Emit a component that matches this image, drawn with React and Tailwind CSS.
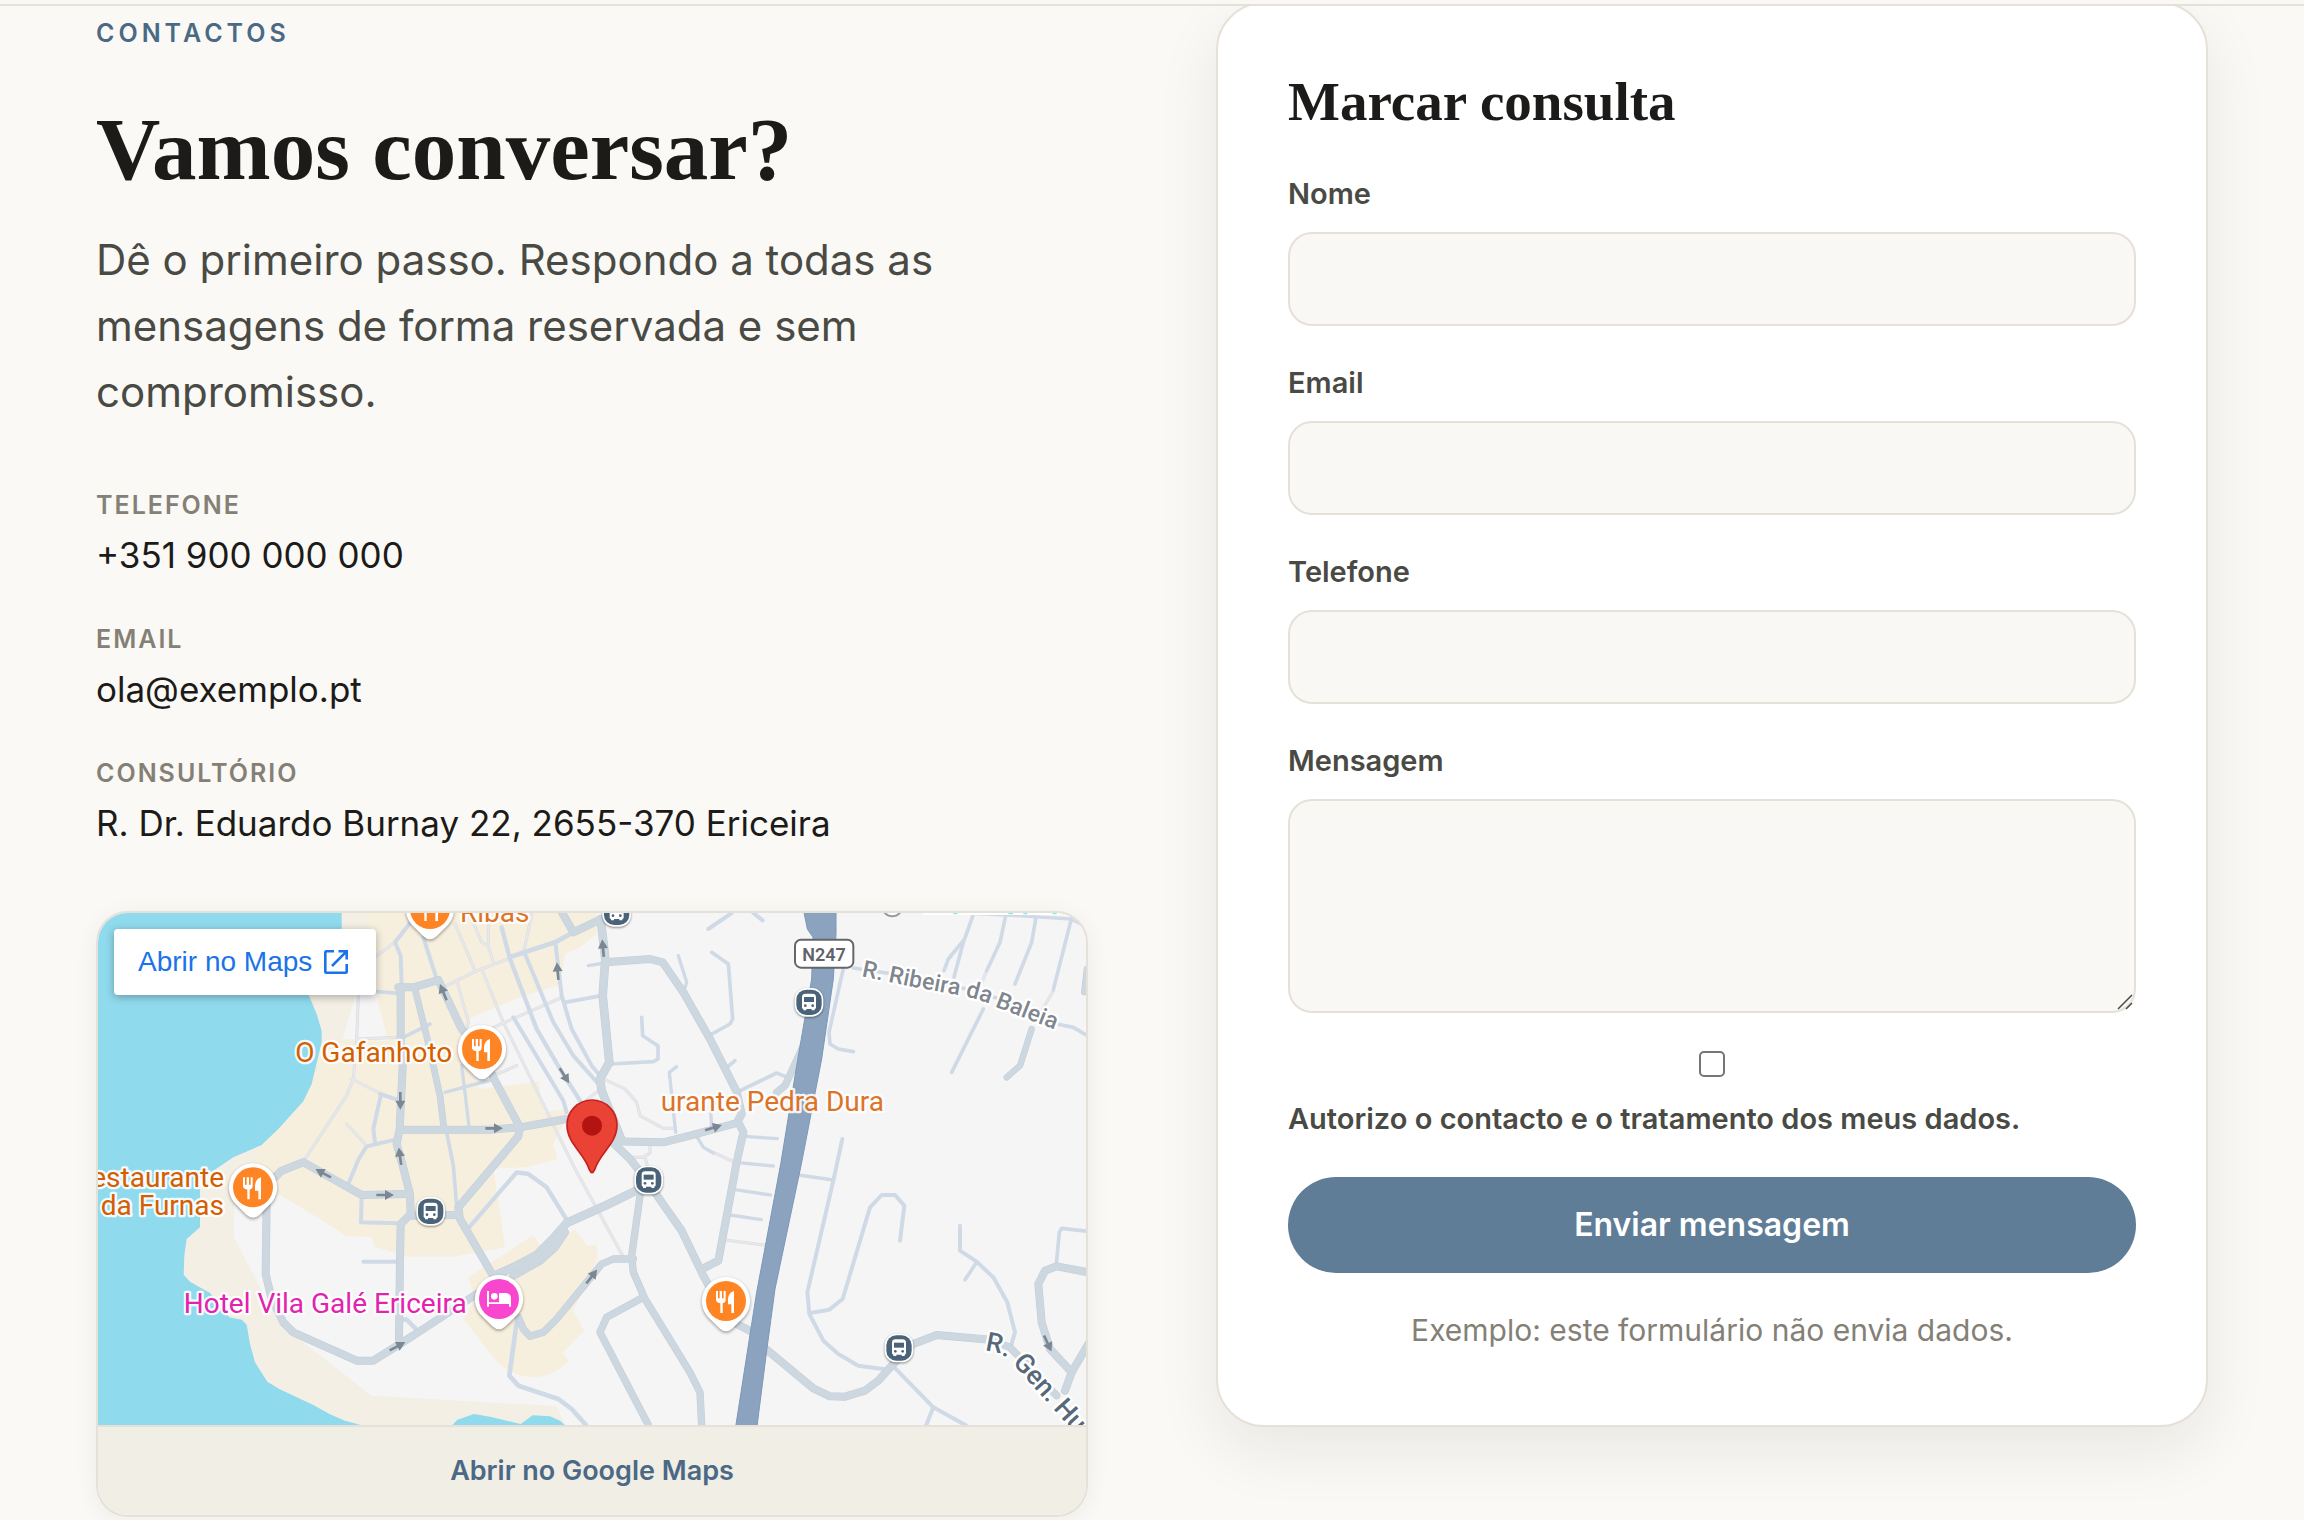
import React from "react";

/* ---------- Map drawing ---------- */

const MAJOR = [
  ["M932 265V430L938 500L929 690L920 735L938 800L960 885L962 945L932 975L930 1080L927 1320", 22],
  ["M925 265H970L1045 243L1115 390L1175 460L1215 545L1290 685L1285 712L1105 925L1110 960L1215 1140", 22],
  ["M975 270L1012 420L1050 590L1062 690", 18],
  ["M930 692H1200L1290 685L1430 660", 22],
  ["M1532 60L1546 180L1538 290L1558 490L1530 540L1535 575L1595 725", 24],
  ["M1565 727L1720 730L1800 710L1940 672L1955 645L1940 578L1860 420L1780 280L1718 190L1680 180L1545 190", 22],
  ["M1410 30L1450 100L1530 62", 22],
  ["M1945 670L1960 700L1940 790L1885 1085L1840 1108", 22],
  ["M530 900L527 1125L545 1200L580 1270L610 1300L800 1385H850L925 1338L1000 1290L1160 1185", 22],
  ["M548 842L575 815L640 790L815 888L950 885", 22],
  ["M960 950L1105 948", 22],
  ["M1640 874L1550 918L1430 972L1388 1020L1340 1068L1280 1100L1225 1125", 24],
  ["M1425 1000L1395 1045L1350 1085L1270 1130", 22],
  ["M1650 890L1625 1070L1630 1120L1665 1200L1800 1420L1830 1480L1835 1578", 20],
  ["M1630 1080H1570L1535 1095L1490 1150L1400 1260L1360 1300L1320 1312L1300 1290L1285 1255", 20],
  ["M1660 1195L1550 1255L1530 1300L1675 1578", 20],
  ["M1565 727L1620 780L1675 850L1712 905L1775 995L1840 1130L1910 1260L1990 1300", 22],
  ["M2030 1352L2170 1468L2220 1492L2265 1493L2325 1475L2365 1445L2410 1395L2470 1335L2540 1308L2700 1322", 22],
  ["M2700 1322L2760 1345L2900 1490", 20],
  ["M2140 440L2085 560L2060 580", 20],
  ["M2995 1120L2900 1102L2865 1115L2845 1155L2855 1270L2880 1350L2945 1420", 22],
  ["M2995 1335L2945 1420L2925 1475", 22],
  ["M2825 390L2790 500L2750 535", 17],
  ["M2990 210L2982 280", 16],
];

const MINOR = [
  ["M962 70L915 130L932 170L935 260", 12],
  ["M860 278L930 283", 11],
  ["M940 415L1000 385L1020 375", 11],
  ["M870 585L930 605", 12],
  ["M872 590L850 690L855 730", 12],
  ["M915 722L830 742L806 780L775 855", 12],
  ["M1000 115L1040 240", 12],
  ["M1065 580L1150 557L1200 545", 10],
  ["M1115 500L1138 690", 10],
  ["M1070 700L1090 800L1100 920", 11],
  ["M1450 100L1395 130L1258 175", 14],
  ["M1235 85L1260 180L1340 390L1410 510L1470 605", 13],
  ["M1305 165L1390 370L1450 470L1530 560", 12],
  ["M1396 130L1415 290L1445 390L1505 500L1530 530", 12],
  ["M1270 355L1420 605L1430 640", 12],
  ["M1425 310L1535 290", 11],
  ["M1495 200L1545 192", 10],
  ["M1655 355L1658 410L1704 440V480L1690 488L1560 495", 11],
  ["M1765 170L1790 250L1782 275", 10],
  ["M1855 90L1925 42", 12],
  ["M1990 42L2018 64", 12],
  ["M1865 160L1915 195L1928 360L1920 375L1860 408", 11],
  ["M1935 485L1905 510", 11],
  ["M1940 580L2060 522L2085 532", 11],
  ["M1760 503L1738 520L1757 700", 10],
  ["M1862 640L1865 680", 10],
  ["M1822 715L1840 745L1870 762", 10],
  ["M1965 712L2062 719", 10],
  ["M1955 792L2050 801", 10],
  ["M1935 872L2042 888", 10],
  ["M1920 948L2014 962", 10],
  ["M815 890L813 970L920 973", 12],
  ["M820 1088H925", 12],
  ["M928 1262H950L988 1300", 14],
  ["M1140 982L1280 820L1315 825L1370 865L1435 970", 13],
  ["M1280 1270L1258 1430L1285 1460L1405 1500L1445 1530L1488 1578", 14],
  ["M2262 200L2217 400L2220 435L2245 450L2290 458", 11],
  ["M2290 207L2390 222L2620 268L2730 300L2900 375L2950 385L2995 412", 11],
  ["M2648 52L2620 130L2592 235", 11],
  ["M2620 125L2575 180L2562 215", 11],
  ["M2746 55L2730 130L2690 215", 11],
  ["M2680 330L2585 520", 11],
  ["M2838 55L2825 130L2775 255", 11],
  ["M2944 60L2890 272", 11],
  ["M2620 42L2780 50L2945 60L2995 88", 10],
  ["M2257 720L2230 845L2152 1180L2158 1245L2200 1325L2245 1365L2305 1400L2395 1412", 12],
  ["M2125 828L2230 843", 11],
  ["M2160 1242L2218 1232L2258 1200L2340 925L2375 888H2415L2443 920L2430 1025", 12],
  ["M2610 980V1055L2660 1088L2710 1135L2752 1210L2775 1300L2760 1350", 12],
  ["M2660 1090L2625 1142", 11],
  ["M2995 997L2915 988L2908 1000L2899 1095", 11],
  ["M2410 1402L2530 1525L2630 1580", 12],
  ["M2530 1525L2508 1580", 12],
];

const LANES = [
  "M805 290L800 420L790 540L770 590L645 780",
  "M800 420L930 415",
  "M785 540L875 585",
  "M770 675L830 740",
  "M860 170L915 130",
  "M1065 262L1155 218L1258 178",
  "M1100 245L1136 370L1125 400",
  "M1175 210L1240 370L1450 800L1598 1070",
  "M1095 75L1155 215",
  "M1145 60L1175 130L1195 142L1210 190",
  "M1325 45L1300 165",
  "M1195 60L1195 140",
  "M1210 385L1412 297",
  "M1210 530L1280 500",
  "M1530 535L1605 570L1640 610L1650 650L1720 688H1755",
  "M1490 602L1530 572",
  "M1620 775H1660L1680 762V735",
  "M1665 775L1672 800",
  "M1870 760L1930 788",
  "M1905 1023L2037 1040",
  "M2690 215L2676 250",
  "M2890 275L2855 335",
];

const ARROWS = [
  [931, 605, 180], [930, 772, -8], [1060, 280, -22], [1403, 217, -5], [1539, 148, -5],
  [1423, 530, 148], [1212, 688, 90], [1870, 686, 72], [700, 823, -62], [885, 888, 90],
  [922, 1342, 62], [1505, 1133, 38], [2873, 1333, 155],
];

const BUSES = [[1022, 937], [1676, 843], [2157, 310], [1580, 40], [2427, 1347]];
const FOOD = [[1176, 450], [489, 865], [1908, 1206], [1020, 30]];

function PinBody({ color }) {
  return (
    <>
      <path
        d="M0-72A72 72 0 0 1 54 48L20 82Q0 100-20 82L-54 48A72 72 0 0 1 0-72Z"
        fill="#fff"
        style={{ filter: "drop-shadow(0 4px 4px rgba(0,0,0,.4))" }}
      />
      <circle r="60" fill={color} />
    </>
  );
}

function FoodPin({ x, y }) {
  return (
    <g transform={`translate(${x} ${y})`}>
      <PinBody color="#ff8424" />
      <path
        fill="#fff"
        d="M-30-30h6v22h5v-22h7v22h5v-22h6v26q0 8-9 11v29h-7V7q-13-3-13-11ZM24-30V36H16V10H6V-6Q8-26 24-30Z"
      />
    </g>
  );
}

function HotelPin({ x, y }) {
  return (
    <g transform={`translate(${x} ${y})`}>
      <PinBody color="#f846cf" />
      <path fill="#fff" d="M-36-24h6V10H0V-18H22Q36-16 36-2V23H30V15H-30V23H-36Z" />
      <circle cx="-14" cy="-8" r="10" fill="#fff" />
    </g>
  );
}

function BusStop({ x, y }) {
  return (
    <g transform={`translate(${x} ${y})`}>
      <rect x="-43" y="-43" width="86" height="86" rx="35" fill="#fff" style={{ filter: "drop-shadow(0 3px 3px rgba(0,0,0,.45))" }} />
      <rect x="-38" y="-38" width="76" height="76" rx="30" fill="#4a6378" />
      <path fill="#fff" d="M-21-16q0-10 11-10h20q11 0 11 10V16q0 3-4 4v4h-9v-4H-8v4h-9v-4q-4-1-4-4Z" />
      <rect x="-15" y="-16" width="30" height="15" fill="#4a6378" />
      <circle cx="-11" cy="10" r="4" fill="#4a6378" />
      <circle cx="11" cy="10" r="4" fill="#4a6378" />
    </g>
  );
}

function TownMap() {
  return (
    <svg
      viewBox="24 42 2964 1536"
      preserveAspectRatio="xMidYMid slice"
      className="block h-full w-full"
      role="img"
      aria-label="Mapa da Ericeira"
      fontFamily="Roboto, sans-serif"
    >
      <rect x="24" y="42" width="2964" height="1536" fill="#f5f5f5" />
      <path fill="#f4efe4" d="M700 42H870V430L600 800L432 910V1015L500 1145L560 1260L640 1330L845 1490L1400 1521L1425 1578H24V800Z" />
      <path
        fill="#f7efdd"
        d="M835 42H1520V105L1470 145L1425 165L1410 258L1290 295L1135 360L1120 480L1170 570L1345 548L1362 638L1425 632L1430 655L1390 735L1402 780L1310 805L1210 808L1245 1045L1090 1073H950L852 1042L847 1015L765 1010L690 960L565 885L480 830L495 780L515 738L565 690L640 607L665 555L695 430L757 420L893 425L860 290L870 170L840 90Z"
      />
      <path fill="#f7efdd" d="M1135 1135L1330 1008L1352 1042L1455 992L1490 1038H1520L1522 1080L1450 1235L1482 1295L1418 1363L1436 1385Q1395 1430 1330 1435Q1250 1430 1210 1375L1120 1260L1155 1200Z" />
      <path fill="#f5f5f5" d="M800 280H858L893 425L757 420Z" />
      <path
        fill="#90daed"
        d="M24 42H755V90L700 200L655 285L680 345L695 395V430L665 555L640 607L565 690L515 738L430 775L330 842V985L290 1020L283 1070L281 1127L300 1148L360 1182L418 1255L455 1262L470 1277L480 1335L495 1390L532 1448L568 1470L670 1518L720 1546L765 1565L812 1578H24Z"
      />
      <path fill="#90daed" d="M1087 1578L1102 1562L1152 1545L1200 1553L1292 1575L1328 1549L1380 1552L1410 1565L1425 1578Z" />

      <g fill="none" strokeLinecap="round" strokeLinejoin="round">
        {LANES.map((d) => <path key={d} d={d} stroke="#d9dade" strokeWidth="9" />)}
        {LANES.map((d) => <path key={d} d={d} stroke="#e7e8eb" strokeWidth="6" />)}
        {MINOR.map(([d, w]) => <path key={d} d={d} stroke="#cfdae6" strokeWidth={w} />)}
        {MAJOR.map(([d, w]) => <path key={d} d={d} stroke="#c3ced9" strokeWidth={w + 2} />)}
        {MAJOR.map(([d, w]) => <path key={d} d={d} stroke="#ccd7e0" strokeWidth={w - 1} />)}
      </g>

      <path
        fill="#8ba3bf"
        stroke="#7b98ba"
        strokeWidth="3"
        d="M2140 30H2238V105L2230 240L2195 480L2133 800L2055 1170L2030 1355L2000 1590H1936L1978 1320L2000 1180L2073 790L2120 500L2165 240L2169 115L2152 90Z"
      />

      <g fill="#7b8793">
        {ARROWS.map(([x, y, r]) => (
          <path key={`${x}-${y}`} transform={`translate(${x} ${y}) rotate(${r})`} d="M0-27L15 0H4V26H-4V0H-15Z" />
        ))}
      </g>

      <g fill="none" stroke="#fff" strokeWidth="12">
        <path d="M2500 42H2910" />
        <path d="M2590 43h12M2755 43h14M2800 43h12M2888 43h12" stroke="#8fe3f0" strokeWidth="6" />
      </g>
      <circle cx="2407" cy="22" r="30" fill="#fff" stroke="#9a9a9a" strokeWidth="6" />

      {BUSES.map(([x, y]) => <BusStop key={x} x={x} y={y} />)}
      {FOOD.map(([x, y]) => <FoodPin key={x} x={x} y={y} />)}
      <HotelPin x={1227} y={1200} />

      <g fontSize="84" stroke="#fff" strokeOpacity="0.9" strokeWidth="14" strokeLinejoin="round" style={{ paintOrder: "stroke" }}>
        <g fill="#d65d00">
          <text x="1087" y="490" textAnchor="end">O Gafanhoto</text>
          <text x="402" y="863" textAnchor="end">estaurante</text>
          <text x="402" y="947" textAnchor="end">da Furnas</text>
        </g>
        <g fill="#dd7327">
          <text x="1110" y="70">Ribas</text>
          <text x="1712" y="636">urante Pedra Dura</text>
        </g>
        <text x="1130" y="1241" textAnchor="end" fill="#e322ad">Hotel Vila Galé Ericeira</text>
      </g>

      <rect x="2115" y="122" width="175" height="84" rx="18" fill="#fff" stroke="#63666a" strokeWidth="6" />
      <text x="2202" y="186" textAnchor="middle" fontSize="54" fontWeight="600" fill="#5f6368">N247</text>

      <defs>
        <path id="ribeira" d="M2314 232L2460 262L2618 291Q2680 304 2720 325L2920 402L3100 470" />
        <path id="general" d="M2684 1354L2725 1362Q2750 1372 2772 1398L2876 1515L3050 1710" />
      </defs>
      <g fontWeight="500" stroke="#fff" strokeWidth="14" strokeLinejoin="round" style={{ paintOrder: "stroke" }}>
        <text fontSize="70" fill="#7f868e"><textPath href="#ribeira">R. Ribeira da Baleia</textPath></text>
        <text fontSize="80" fill="#566879"><textPath href="#general">R. Gen. Hum</textPath></text>
      </g>

      <path
        fill="#ea4335"
        stroke="#c5221f"
        strokeWidth="5"
        d="M1506 603A75 75 0 0 1 1581 678C1581 735 1530 760 1514 812Q1506 830 1498 812C1482 760 1431 735 1431 678A75 75 0 0 1 1506 603Z"
      />
      <circle cx="1506" cy="680" r="30" fill="#b31412" />
    </svg>
  );
}

/* ---------- Page ---------- */

const CONTACTS = [
  { label: "Telefone", value: "+351 900 000 000", href: "tel:+351900000000" },
  { label: "Email", value: "ola@exemplo.pt", href: "mailto:ola@exemplo.pt" },
  { label: "Consultório", value: "R. Dr. Eduardo Burnay 22, 2655-370 Ericeira" },
];

const FIELDS = [
  { id: "nome", label: "Nome", type: "text" },
  { id: "email", label: "Email", type: "email" },
  { id: "telefone", label: "Telefone", type: "tel" },
];

const SERIF = "font-['Liberation_Serif',serif] font-bold text-[#1c1b19]";
const LABEL = "text-[29px] leading-[44px] font-semibold text-[#4a4a45]";
const CONTROL = "block w-full rounded-3xl border-2 border-[#e5e1d8] bg-[#faf8f4] px-7 text-[32px] text-[#1c1b19]";

export default function App() {
  return (
    <div className="min-h-screen bg-[#faf9f5] font-['Inter',sans-serif]">
      <header className="sticky top-0 z-10 h-[6px] border-b-2 border-[#e5e0d8] bg-[#faf8f5]" />
      <main className="-mt-1 grid grid-cols-2 items-start gap-32 px-24">
        <section className="pt-[11px]">
          <p className="text-[25px] leading-10 font-semibold tracking-[4px] text-[#4b6985] uppercase">Contactos</p>
          <h1 className={`mt-[48px] text-[89px] leading-[96px] ${SERIF}`}>Vamos conversar?</h1>
          <p className="mt-[30px] max-w-[880px] text-[42px] leading-[66px] text-[#4a4a45]">
            Dê o primeiro passo. Respondo a todas as mensagens de forma reservada e sem compromisso.
          </p>
          <dl className="mt-[60px] flex flex-col gap-[34px]">
            {CONTACTS.map(({ label, value, href }) => (
              <div key={label}>
                <dt className="text-[25px] leading-10 font-semibold tracking-[2px] text-[#848076] uppercase">{label}</dt>
                <dd className="text-[35px] leading-[60px] text-[#1c1b19]">{href ? <a href={href}>{value}</a> : value}</dd>
              </div>
            ))}
          </dl>
          <div className="mt-[58px] overflow-hidden rounded-[32px] border-2 border-[#e5e0d8] shadow-[0_4px_24px_rgba(28,27,25,0.06)]">
            <div className="relative h-[512px]">
              <TownMap />
              <a
                href="#maps"
                className="absolute top-4 left-4 flex h-[66px] items-center gap-3 rounded-[4px] bg-white pr-7 pl-6 font-['Liberation_Sans',sans-serif] text-[28px] text-[#1a73e8] shadow-[0_2px_8px_rgba(0,0,0,0.3)]"
              >
                Abrir no Maps
                <svg viewBox="0 0 24 24" className="size-6" fill="none" stroke="currentColor" strokeWidth="2.6" aria-hidden="true">
                  <path d="M10 1.3H2.5Q1.3 1.3 1.3 2.5V21.5Q1.3 22.7 2.5 22.7H21.5Q22.7 22.7 22.7 21.5V14M14.5 1.3H22.7V9.5M22.3 1.7L8 16" />
                </svg>
              </a>
            </div>
            <a
              href="#google-maps"
              className="block border-t-2 border-[#e5e0d8] bg-[#f1eee6] py-[22px] text-center text-[27px] leading-[44px] font-semibold text-[#4b6985]"
            >
              Abrir no Google Maps
            </a>
          </div>
        </section>

        <form
          onSubmit={(e) => e.preventDefault()}
          className="rounded-[48px] border-2 border-[#e5e1d8] bg-white px-[70px] pt-[68px] pb-[72px] shadow-[0_24px_64px_rgba(28,27,25,0.08)]"
        >
          <h2 className={`text-[55px] leading-[60px] ${SERIF}`}>Marcar consulta</h2>
          <div className="mt-[40px] flex flex-col gap-[35px]">
            {FIELDS.map(({ id, label, type }) => (
              <div key={id}>
                <label htmlFor={id} className={`mb-4 block ${LABEL}`}>{label}</label>
                <input id={id} name={id} type={type} className={`h-[94px] ${CONTROL}`} />
              </div>
            ))}
            <div>
              <label htmlFor="mensagem" className={`mb-4 block ${LABEL}`}>Mensagem</label>
              <div className="relative">
                <textarea id="mensagem" name="mensagem" className={`h-[214px] resize-none py-6 ${CONTROL}`} />
                <svg viewBox="0 0 16 16" className="pointer-events-none absolute right-[3px] bottom-[3px] size-4" stroke="#4a4a45" strokeWidth="1.5" aria-hidden="true">
                  <path d="M1 15L15 1M9 15L15 9" />
                </svg>
              </div>
            </div>
          </div>
          <label className={`mt-[38px] flex flex-col gap-[20px] ${LABEL}`}>
            <input
              type="checkbox"
              className="size-[26px] appearance-none self-center rounded-[5px] border-2 border-[#767676] bg-white checked:bg-[#607d98]"
            />
            Autorizo o contacto e o tratamento dos meus dados.
          </label>
          <button type="submit" className="mt-[36px] h-24 w-full rounded-full bg-[#607d98] text-[32px] font-semibold text-white">
            Enviar mensagem
          </button>
          <p className="mt-[34px] text-center text-[30px] leading-[46px] text-[#848076]">
            Exemplo: este formulário não envia dados.
          </p>
        </form>
      </main>
    </div>
  );
}
